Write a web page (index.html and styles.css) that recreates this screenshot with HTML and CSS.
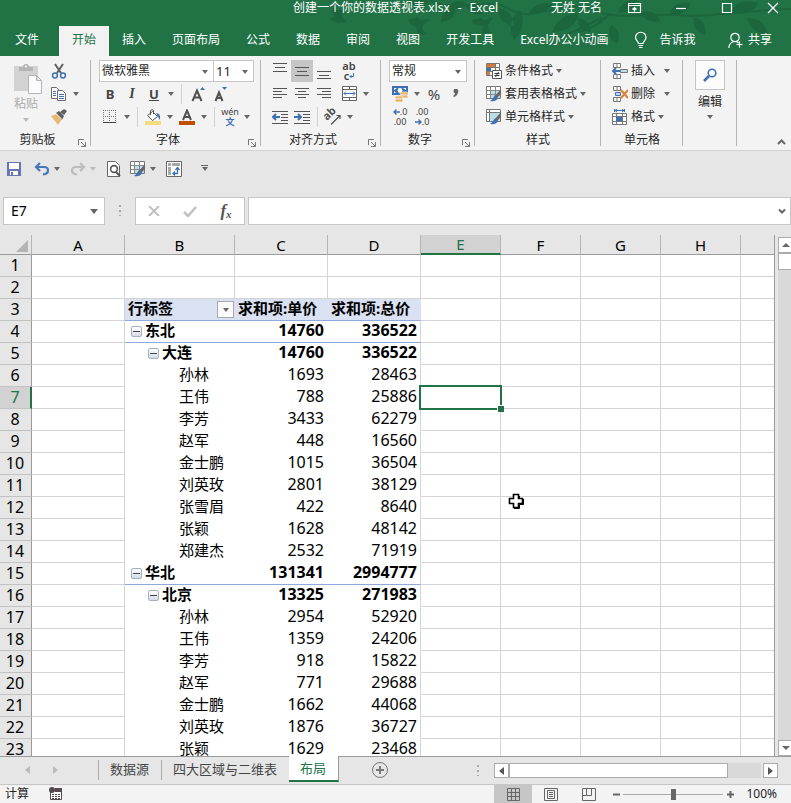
FILE: index.html
```html
<!DOCTYPE html>
<html lang="zh-CN">
<head>
<meta charset="utf-8">
<title>创建一个你的数据透视表.xlsx - Excel</title>
<link rel="stylesheet" href="styles.css">
</head>
<body>
<header class="top">
  <svg class="leaves" viewBox="0 0 471 56" width="471" height="56" aria-hidden="true">
    <g fill="#1c663d">
      <path d="M12 8l5 2 6-1-1 8 4 5-8 1-9-4 5-2z"/>
      <path d="M88 20l9-3 4 3 9-1-8 7 2 6 4 2-10 1-2-8-6-3z"/>
      <path d="M152 20l8-2 5 2 8-3-5 8 1 6 4 2-11 1 1-8-10-2z"/>
      <path d="M88 0c6 8 14 8 22 2l-3-2zM128 6c6-6 12-6 18-3-5 6-11 7-18 3zM121 22c0-8 6-14 14-15 1 9-4 14-14 15zM146 4c2 8 8 12 18 10-2-8-8-11-18-10z"/>
      <path d="M178 8c10 1 16 9 16 18-11-2-16-8-16-18zM209 13c9 0 18-2 24-8-9-4-19-1-24 8zM200 10c-10 8-12 18-6 30 9-9 11-19 6-30z"/>
      <path d="M232 32c4-11 13-18 27-19-3 12-12 19-27 19zM258 18c8 1 12 6 13 14-9-1-13-6-13-14zM298 13c2-9 9-14 19-13-2 9-9 13-19 13zM320 12c10-3 17 1 20 9-9 2-16-1-20-9z"/>
      <path d="M291 25c8 4 10 11 6 19-8-5-10-12-6-19zM265 38c7-4 13-2 17 4-7 3-13 2-17-4zM350 14c2-9 10-13 21-11-4 9-11 13-21 11zM374 17c9 2 13 9 11 18-9-3-13-10-11-18zM410 12c6-10 16-13 28-9-5 10-15 13-28 9zM427 18c12 0 19 6 21 17-12-2-19-8-21-17z"/>
    </g>
    <g fill="none" stroke="#1c663d" stroke-width="2">
      <path d="M110 0c14 10 42 4 66 4 10 0 18 12 34 10 26-4 42-12 60-5 30 12 50 4 86 6 32 3 56-4 115-6M258 32c14-2 22-10 32-18M230 40c20-4 36-16 52-22"/>
    </g>
  </svg>
  <div class="title-row">
    <div class="title"><span>创建一个你的数据透视表.xlsx</span><span>-</span><span>Excel</span></div>
    <div class="window">
      <span class="user">无姓 无名</span>
      <button aria-label="功能区显示选项"><svg class="line" width="14" height="12" viewBox="0 0 14 12"><path d="M.5 1.500h12v9H.5zM.5 3.500h12M6.500 9.500v-4M4.500 7.500l2-2 2 2"/></svg></button>
      <button aria-label="最小化"><svg class="line" width="12" height="12" viewBox="0 0 12 12"><path d="M1 6.500h10"/></svg></button>
      <button aria-label="最大化"><svg class="line" width="12" height="12" viewBox="0 0 12 12"><path d="M1.500 1.500h9v9h-9z"/></svg></button>
      <button aria-label="关闭"><svg class="line" width="12" height="12" viewBox="0 0 12 12"><path d="M1 1l10 10M11 1L1 11"/></svg></button>
    </div>
  </div>
  <nav class="tabs">
    <a class="file" href="#">文件</a><a class="on" href="#">开始</a><a href="#">插入</a><a href="#">页面布局</a><a href="#">公式</a><a href="#">数据</a><a href="#">审阅</a><a href="#">视图</a><a href="#">开发工具</a><a href="#">Excel办公小动画</a>
    <button class="tell"><svg class="line" width="14" height="18" viewBox="0 0 14 18"><path d="M4.500 12.500c0-2-3-3-3-6a5 5 0 0 1 10.500 0c0 3-3 4-3 6zM4.500 14.500h4.500M5 16.500h3.500"/></svg>告诉我</button>
    <button class="share"><svg class="line" width="16" height="17" viewBox="0 0 16 17"><circle cx="7" cy="5.500" r="4.200"/><path d="M.8 16c.2-3.500 2.200-5.500 4.500-6.300M8.500 9.500l2 1.500M11.500 9.500v6M8.500 12.500h6"/></svg>共享</button>
  </nav>
</header>

<section class="ribbon" aria-label="开始">
  <div class="group clip">
    <div class="clip-body">
      <button class="paste"><svg width="30" height="32" viewBox="0 0 30 32"><path fill="#d2d2d2" d="M1 3h24v25H1z"/><path fill="#b4b4b4" d="M6 4h4a3 3 0 0 1 6 0h4v4H6z"/><circle cx="13" cy="3.500" r="1" fill="#fff"/><path fill="#fbfbfd" stroke="#b4b4b8" d="M15.500 12.500h8l5 5v13h-13zM23.500 12.500v5h5"/></svg><span>粘贴</span><i class="caret pale"></i></button>
      <div class="rows">
        <div class="row"><button class="b" aria-label="剪切"><svg width="16" height="16" viewBox="0 0 16 16"><path stroke="#5f5f5f" stroke-width="2" d="M4 1l6 9M12 1L6 10"/><g fill="none" stroke="#3f70b4" stroke-width="1.500"><circle cx="4" cy="12.500" r="2.400"/><circle cx="12" cy="12.500" r="2.400"/></g></svg></button></div>
        <div class="row"><button class="b" aria-label="复制"><svg width="16" height="16" viewBox="0 0 16 16"><g fill="#fff" stroke="#6a6a6a"><path d="M.5 1.500h5l3 3v8h-8z"/><path d="M6.500 4.500h5l3 3v7h-8z"/></g><path stroke="#3f70b4" d="M2 5.500h3M2 7.500h3M2 9.500h3M8 8.500h5M8 10.500h5M8 12.500h5"/></svg></button><button class="drop" aria-label="复制选项"><i class="caret"></i></button></div>
        <div class="row"><button class="b" aria-label="格式刷"><svg width="16" height="16" viewBox="0 0 16 16"><path fill="#e9b872" d="M0 7l6-2 5 5-4 6z"/><path fill="#5f5f5f" d="M5 4l3-2 5 5-2 4zM9 3l4-3 3 2-3 4z"/><path stroke="#fff" d="M5 4.500l6 6"/></svg></button></div>
      </div>
    </div>
    <footer><span>剪贴板</span><button class="launch" aria-label="剪贴板设置"><svg width="8" height="8" viewBox="0 0 8 8"><path d="M.5 6V.5H6M3 3l4 4M7.500 3v4.500H3"/></svg></button></footer>
  </div>

  <div class="group font">
    <div class="row"><span class="combo wide"><select aria-label="字体"><option>微软雅黑</option></select><i class="caret"></i></span><span class="combo size"><select aria-label="字号"><option>11</option></select><i class="caret"></i></span></div>
    <div class="row"><button class="b bold">B</button><button class="b ital">I</button><button class="b und">U</button><button class="drop" aria-label="下划线选项"><i class="caret"></i></button><i class="sep"></i><button class="b" aria-label="增大字号"><svg width="16" height="16" viewBox="0 0 16 16"><path fill="none" stroke="#505050" stroke-width="2" d="M3.500 15L8 4.500 12.500 15M5 11.500h6"/><path fill="#3f70b4" d="M11 4l2.500-3L16 4z"/></svg></button><button class="b" aria-label="减小字号"><svg width="16" height="16" viewBox="0 0 16 16"><path fill="none" stroke="#505050" stroke-width="2" d="M4.500 15L8 6.500l3.500 8.500M6 12h4"/><path fill="#3f70b4" d="M11 1h5l-2.500 3z"/></svg></button></div>
    <div class="row"><button class="b" aria-label="边框"><svg width="14" height="14" viewBox="0 0 14 14"><path fill="none" stroke="#777" stroke-dasharray="1 1" d="M.5 0v12M6.500 0v12M12.500 0v12M0 .5h13M0 6.500h13"/><path stroke="#444" d="M0 12.500h13"/></svg></button><button class="drop" aria-label="边框选项"><i class="caret"></i></button><i class="sep"></i><button class="b" aria-label="填充颜色"><svg width="16" height="16" viewBox="0 0 16 16"><path fill="#fff" stroke="#555" d="M2.500 6.500l5-4 5 5-5 4z"/><path fill="none" stroke="#555" d="M5.500 6V1.500q1.500-2 3 0V5"/><path fill="#3f70b4" d="M11 4q5 0 4 7l-2-3z"/><path fill="#f5dd7b" d="M0 12h16v4H0z"/></svg></button><button class="drop" aria-label="填充选项"><i class="caret"></i></button><button class="b" aria-label="字体颜色"><svg width="16" height="16" viewBox="0 0 16 16"><path fill="none" stroke="#505050" stroke-width="2" d="M4 11L8 1.500 12 11M5 8h6"/><path fill="#bf5000" d="M0 12h16v4H0z"/></svg></button><button class="drop" aria-label="颜色选项"><i class="caret"></i></button><i class="sep"></i><button class="b pinyin"><span>wén</span><b>文</b></button><button class="drop" aria-label="拼音选项"><i class="caret"></i></button></div>
    <footer><span>字体</span><button class="launch" aria-label="字体设置"><svg width="8" height="8" viewBox="0 0 8 8"><path d="M.5 6V.5H6M3 3l4 4M7.500 3v4.500H3"/></svg></button></footer>
  </div>

  <div class="group align">
    <div class="row"><button class="b" aria-label="顶端对齐"><svg class="bars" width="14" height="16" viewBox="0 0 14 16"><path d="M0 .5h14M2 4.500h10M0 8.500h14"/></svg></button><button class="b on" aria-label="垂直居中"><svg class="bars" width="14" height="16" viewBox="0 0 14 16"><path d="M0 4.500h14M2 8.500h10M0 12.500h14"/></svg></button><button class="b" aria-label="底端对齐"><svg class="bars" width="14" height="16" viewBox="0 0 14 16"><path d="M0 8.500h14M2 12.500h10M0 15.500h14"/></svg></button><button class="b next wrap" aria-label="自动换行"><span>ab</span><span>c<svg width="5" height="8" viewBox="0 0 5 8"><path fill="none" stroke="#3f70b4" d="M4.500 0v3.500H1M2.500 2L1 3.500 2.500 5"/></svg></span></button></div>
    <div class="row"><button class="b" aria-label="左对齐"><svg class="bars" width="14" height="14" viewBox="0 0 14 14"><path d="M0 1.500h14M0 4.500h9M0 7.500h14M0 10.500h9"/></svg></button><button class="b" aria-label="居中"><svg class="bars" width="14" height="14" viewBox="0 0 14 14"><path d="M0 1.500h14M3 4.500h8M0 7.500h14M3 10.500h8"/></svg></button><button class="b" aria-label="右对齐"><svg class="bars" width="14" height="14" viewBox="0 0 14 14"><path d="M0 1.500h14M5 4.500h9M0 7.500h14M5 10.500h9"/></svg></button><button class="b next" aria-label="合并后居中"><svg width="15" height="15" viewBox="0 0 15 15"><path fill="#fff" stroke="#666" d="M.5.5h14v14H.5zM.5 3.500h14M.5 11.500h14M7.500 0v3M7.500 12v3"/><path fill="none" stroke="#3f70b4" d="M2 7.500h11M4 5.500l-2 2 2 2M11 5.500l2 2-2 2"/></svg></button><button class="drop" aria-label="合并选项"><i class="caret"></i></button></div>
    <div class="row"><button class="b" aria-label="减少缩进"><svg class="bars" width="16" height="14" viewBox="0 0 16 14"><path d="M0 1.500h16M9 4.500h7M9 7.500h7M9 10.500h7M0 13.500h16"/><path class="blue" d="M8 7H1M4 4L1 7l3 3"/></svg></button><button class="b" aria-label="增加缩进"><svg class="bars" width="16" height="14" viewBox="0 0 16 14"><path d="M0 1.500h16M9 4.500h7M9 7.500h7M9 10.500h7M0 13.500h16"/><path class="blue" d="M0 7h7M4 4l3 3-3 3"/></svg></button><i class="sep"></i><button class="b" aria-label="方向"><svg width="18" height="18" viewBox="0 0 18 18"><text class="slant" x="3" y="13" transform="rotate(-45 3 13)">ab</text><path fill="none" stroke="#505050" stroke-width="1.200" d="M7 16.500L16 7.500M12.500 7.500H16V11"/></svg></button><button class="drop" aria-label="方向选项"><i class="caret"></i></button></div>
    <footer><span>对齐方式</span><button class="launch" aria-label="对齐设置"><svg width="8" height="8" viewBox="0 0 8 8"><path d="M.5 6V.5H6M3 3l4 4M7.500 3v4.500H3"/></svg></button></footer>
  </div>

  <div class="group number">
    <div class="row"><span class="combo fmt"><select aria-label="数字格式"><option>常规</option></select><i class="caret"></i></span></div>
    <div class="row"><button class="b" aria-label="会计数字格式"><svg width="16" height="16" viewBox="0 0 16 16"><path fill="#3f70b4" d="M0 0h16v9H0z"/><path fill="#fff" d="M2 2h3L2 4zM11 2h3v2zM2 5l2 2H2z"/><circle cx="8" cy="4.500" r="2.400" fill="#fff"/><g fill="#e8b268" stroke="#f3f3f3" stroke-width=".7"><rect x="8" y="6" width="8" height="3" rx="1.500"/><rect x="8" y="9" width="8" height="3" rx="1.500"/><rect x="3" y="10" width="8" height="3" rx="1.500"/><rect x="3" y="13" width="8" height="3" rx="1.500"/></g></svg></button><button class="drop" aria-label="货币选项"><i class="caret"></i></button><button class="b pct">%</button><button class="b comma" aria-label="千位分隔样式"><svg width="6" height="9" viewBox="0 0 6 9"><path fill="#666" d="M1 0h3q2 1 1 4-1 3-4 4l-1-1q2-1 2-3H1q-1-2 0-4z"/></svg></button></div>
    <div class="row"><button class="b dec" aria-label="增加小数位数"><span><svg width="7" height="6" viewBox="0 0 7 6"><path d="M7 3H1M3.500.5L1 3l2.500 2.500"/></svg>.0</span><span>.00</span></button><button class="b dec" aria-label="减少小数位数"><span>.00</span><span><svg width="7" height="6" viewBox="0 0 7 6"><path d="M0 3h6M3.500.5L6 3 3.500 5.500"/></svg>.0</span></button></div>
    <footer><span>数字</span><button class="launch" aria-label="数字设置"><svg width="8" height="8" viewBox="0 0 8 8"><path d="M.5 6V.5H6M3 3l4 4M7.500 3v4.500H3"/></svg></button></footer>
  </div>

  <div class="group styles">
    <div class="row"><button class="cmd"><svg width="16" height="16" viewBox="0 0 16 16"><path fill="#fff" stroke="#777" d="M.5.500h13v12H.5zM.5 4.500h13M.5 8.500h13M9.500 0v12"/><path fill="#d17a3c" d="M1 1h8v3H1zM1 9h3v3H1z"/><path fill="#3f70b4" d="M1 5h4v3H1z"/><path fill="#fff" stroke="#555" d="M6.500 7.500h9v8h-9z"/><path stroke="#333" d="M8.500 10.500h5M8.500 12.500h5M12.500 9l-3 5"/></svg>条件格式<i class="caret"></i></button></div>
    <div class="row"><button class="cmd"><svg width="16" height="16" viewBox="0 0 16 16"><path fill="#fff" stroke="#777" d="M.5.500h14v12H.5z"/><path fill="#bcdde6" d="M5 5h9v7H5z"/><path stroke="#888" d="M.5 4.500h14M.5 8.500h14M4.500 0v12M9.500 0v12"/><path fill="#666" d="M15 3v5l-4 4-2-2z"/><path fill="#3f70b4" d="M9 9l3 3q-2 4-8 3 3-2 5-6z"/></svg>套用表格格式<i class="caret"></i></button></div>
    <div class="row"><button class="cmd"><svg width="16" height="16" viewBox="0 0 16 16"><path fill="#fff" stroke="#777" d="M.5.500h14v12H.5zM.5 3.500h14M3.500 0v12"/><path fill="#bcdde6" d="M4 4h10v8H4z"/><path fill="#666" d="M15 3v5l-4 4-2-2z"/><path fill="#3f70b4" d="M9 9l3 3q-2 4-8 3 3-2 5-6z"/></svg>单元格样式<i class="caret"></i></button></div>
    <footer><span>样式</span></footer>
  </div>

  <div class="group cells">
    <div class="row"><button class="cmd even"><svg width="16" height="16" viewBox="0 0 16 16"><path fill="#fff" stroke="#777" d="M1.500.500h7v4h-7zM5 0v4M1.500 11.500h7v4h-7zM5 11v4"/><path fill="#bcdde6" stroke="#777" d="M8.500 6.500h7v3h-7z"/><path fill="none" stroke="#3f70b4" stroke-width="2" d="M8 8H1M4 5L1 8l3 3"/></svg>插入<i class="caret"></i></button></div>
    <div class="row"><button class="cmd even"><svg width="16" height="16" viewBox="0 0 16 16"><path fill="#fff" stroke="#777" d="M1.500.500h7v4h-7zM5 0v4M1.500 11.500h7v4h-7zM5 11v4"/><path fill="#bcdde6" stroke="#3f70b4" d="M3.500 6.500h5v3h-5z"/><path stroke="#dd812e" stroke-width="2" d="M9 4l7 8M16 4l-7 8"/></svg>删除<i class="caret"></i></button></div>
    <div class="row"><button class="cmd"><svg width="16" height="16" viewBox="0 0 16 16"><path fill="none" stroke="#3f70b4" d="M2 1.500h11M2.500 0v3M12.500 0v3M5 0L3 1.500 5 3M10 0l2 1.500L10 3"/><path fill="#fff" stroke="#777" d="M.5 4.500h14v11H.5zM.5 7.500h14M.5 12.500h14M4.500 4v12M10.500 4v12"/><path fill="#3f70b4" d="M4 8h6v4H4z"/></svg>格式<i class="caret"></i></button></div>
    <footer><span>单元格</span></footer>
  </div>

  <div class="group edit">
    <button class="find"><span class="lens"><svg width="14" height="14" viewBox="0 0 14 14"><circle cx="9" cy="5" r="3.800" fill="none" stroke="#3f70b4" stroke-width="1.600"/><path stroke="#3f70b4" stroke-width="2.600" d="M6 8l-5 5"/></svg></span><span>编辑</span><i class="caret"></i></button>
  </div>
  <button class="fold" aria-label="折叠功能区"><svg width="9" height="6" viewBox="0 0 9 6"><path fill="none" stroke="#666" stroke-width="2" d="M1 5l3.500-3.500L8 5"/></svg></button>
</section>

<div class="quick">
  <button class="q" aria-label="保存"><svg width="14" height="14" viewBox="0 0 14 14"><path fill="#6676b0" d="M0 0h14v14H0z"/><path fill="#fff" d="M2 1h10v6H2zM3 9h8v4H3z"/><path fill="#6676b0" d="M4 10h2v3H4z"/></svg></button>
  <button class="q" aria-label="撤消"><svg width="16" height="14" viewBox="0 0 16 14"><path fill="none" stroke="#4577b9" stroke-width="2.200" d="M2 5h8q4 0 4 3.500T9 12.500M6 1L2 5l4 4"/></svg></button><button class="drop" aria-label="撤消列表"><i class="caret"></i></button>
  <button class="q" aria-label="恢复"><svg width="16" height="14" viewBox="0 0 16 14"><path fill="none" stroke="#bcbcbc" stroke-width="2.200" d="M14 5H6Q2 5 2 8.500t5 4M10 1l4 4-4 4"/></svg></button><button class="drop" aria-label="恢复列表"><i class="caret pale"></i></button>
  <button class="q" aria-label="打印预览"><svg width="14" height="16" viewBox="0 0 14 16"><path fill="#fff" stroke="#666" d="M.5.500h8l4 4v11H.5z"/><circle cx="7" cy="8" r="3.400" fill="#fff" stroke="#555" stroke-width="1.600"/><path stroke="#555" stroke-width="2" d="M9 11l4 4"/></svg></button>
  <button class="q near" aria-label="表格样式"><svg width="16" height="16" viewBox="0 0 16 16"><path fill="#fff" stroke="#777" d="M.5.500h14v12H.5z"/><path fill="#bcdde6" d="M5 5h9v7H5z"/><path stroke="#888" d="M.5 4.500h14M.5 8.500h14M4.500 0v12M9.500 0v12"/><path fill="#666" d="M15 3v5l-4 4-2-2z"/><path fill="#3f70b4" d="M9 9l3 3q-2 4-8 3 3-2 5-6z"/></svg></button><button class="drop" aria-label="样式列表"><i class="caret"></i></button>
  <button class="q" aria-label="数据透视表"><svg width="16" height="16" viewBox="0 0 16 16"><path fill="#fff" stroke="#666" d="M.5.500h15v15H.5z"/><path fill="#a9a9a9" d="M2 2h3v3H2zM6 2h8v3H6zM2 6h3v8H2z"/><path fill="none" stroke="#3f70b4" stroke-width="1.300" d="M7 12.500h4.500V7M9 10.500l-2 2 2 2M9.500 9l2-2.500 2 2.500"/></svg></button>
  <button class="more" aria-label="自定义快速访问工具栏"><i class="caret"></i></button>
</div>

<div class="formula">
  <span class="name"><input aria-label="名称框" value="E7"><i class="caret"></i></span>
  <i class="dots"></i>
  <span class="entry">
    <button aria-label="取消"><svg width="12" height="10" viewBox="0 0 12 10"><path stroke="#c0c0c0" stroke-width="2" d="M1 0l10 10M11 0L1 10"/></svg></button>
    <button aria-label="输入"><svg width="14" height="11" viewBox="0 0 14 11"><path fill="none" stroke="#c0c0c0" stroke-width="2.500" d="M1 6l4 4 8-9"/></svg></button>
    <button class="fx" aria-label="插入函数"><i>f</i><small>x</small></button>
  </span>
  <span class="bar"><input aria-label="编辑栏"><svg width="8" height="7" viewBox="0 0 8 7"><path fill="none" stroke="#666" stroke-width="2" d="M1 1.500L4 4.500l3-3"/></svg></span>
</div>

<main class="sheet">
  <div class="pane">
    <table>
      <colgroup><col class="c0"><col class="c3"><col class="c2"><col class="c3"><col class="c3"><col class="c4"><col class="c4"><col class="c4"><col class="c4"><col></colgroup>
      <thead><tr><th class="all"><svg width="12" height="12" viewBox="0 0 12 12"><path fill="#b4b4b4" d="M12 0v12H0z"/></svg></th><th>A</th><th>B</th><th>C</th><th>D</th><th class="sel">E</th><th>F</th><th>G</th><th>H</th><th></th></tr></thead>
      <tbody>
        <tr><th>1</th><td></td><td></td><td></td><td></td><td></td><td></td><td></td><td></td><td></td></tr>
        <tr><th>2</th><td></td><td></td><td></td><td></td><td></td><td></td><td></td><td></td><td></td></tr>
        <tr class="p head"><th>3</th><td></td><td><span class="lab">行标签<button class="filter" aria-label="筛选行标签"><i class="caret"></i></button></span></td><td>求和项:单价</td><td>求和项:总价</td><td></td><td></td><td></td><td></td><td></td></tr>
        <tr class="p sum"><th>4</th><td></td><td class="l1"><button class="min" aria-label="折叠"></button>东北</td><td>14760</td><td>336522</td><td></td><td></td><td></td><td></td><td></td></tr>
        <tr class="p sub"><th>5</th><td></td><td class="l2"><button class="min" aria-label="折叠"></button>大连</td><td>14760</td><td>336522</td><td></td><td></td><td></td><td></td><td></td></tr>
        <tr class="p"><th>6</th><td></td><td>孙林</td><td>1693</td><td>28463</td><td></td><td></td><td></td><td></td><td></td></tr>
        <tr class="p"><th class="sel">7</th><td></td><td>王伟</td><td>788</td><td>25886</td><td class="active"></td><td></td><td></td><td></td><td></td></tr>
        <tr class="p"><th>8</th><td></td><td>李芳</td><td>3433</td><td>62279</td><td></td><td></td><td></td><td></td><td></td></tr>
        <tr class="p"><th>9</th><td></td><td>赵军</td><td>448</td><td>16560</td><td></td><td></td><td></td><td></td><td></td></tr>
        <tr class="p"><th>10</th><td></td><td>金士鹏</td><td>1015</td><td>36504</td><td></td><td></td><td></td><td></td><td></td></tr>
        <tr class="p"><th>11</th><td></td><td>刘英玫</td><td>2801</td><td>38129</td><td></td><td></td><td></td><td></td><td></td></tr>
        <tr class="p"><th>12</th><td></td><td>张雪眉</td><td>422</td><td>8640</td><td></td><td></td><td></td><td></td><td></td></tr>
        <tr class="p"><th>13</th><td></td><td>张颖</td><td>1628</td><td>48142</td><td></td><td></td><td></td><td></td><td></td></tr>
        <tr class="p"><th>14</th><td></td><td>郑建杰</td><td>2532</td><td>71919</td><td></td><td></td><td></td><td></td><td></td></tr>
        <tr class="p sum"><th>15</th><td></td><td class="l1"><button class="min" aria-label="折叠"></button>华北</td><td>131341</td><td>2994777</td><td></td><td></td><td></td><td></td><td></td></tr>
        <tr class="p sub"><th>16</th><td></td><td class="l2"><button class="min" aria-label="折叠"></button>北京</td><td>13325</td><td>271983</td><td></td><td></td><td></td><td></td><td></td></tr>
        <tr class="p"><th>17</th><td></td><td>孙林</td><td>2954</td><td>52920</td><td></td><td></td><td></td><td></td><td></td></tr>
        <tr class="p"><th>18</th><td></td><td>王伟</td><td>1359</td><td>24206</td><td></td><td></td><td></td><td></td><td></td></tr>
        <tr class="p"><th>19</th><td></td><td>李芳</td><td>918</td><td>15822</td><td></td><td></td><td></td><td></td><td></td></tr>
        <tr class="p"><th>20</th><td></td><td>赵军</td><td>771</td><td>29688</td><td></td><td></td><td></td><td></td><td></td></tr>
        <tr class="p"><th>21</th><td></td><td>金士鹏</td><td>1662</td><td>44068</td><td></td><td></td><td></td><td></td><td></td></tr>
        <tr class="p"><th>22</th><td></td><td>刘英玫</td><td>1876</td><td>36727</td><td></td><td></td><td></td><td></td><td></td></tr>
        <tr class="p"><th>23</th><td></td><td>张颖</td><td>1629</td><td>23468</td><td></td><td></td><td></td><td></td><td></td></tr>
      </tbody>
    </table>
    <svg class="cursor" width="17" height="17" viewBox="0 0 17 17"><path fill="#fff" stroke="#000" stroke-width="1.600" d="M5.500 1.500h5v4h4v5h-4v4h-5v-4h-4v-5h4z"/><path fill="none" stroke="#000" d="M11.500 3v2.500M15.500 6v5.500h-4v4H6"/></svg>
  </div>
  <div class="vscroll">
    <button aria-label="向上滚动"><i class="caret up"></i></button>
    <span class="vthumb"></span>
    <button class="end" aria-label="向下滚动"><i class="caret"></i></button>
  </div>
</main>

<div class="sheets">
  <button class="nav" aria-label="上一张"><i class="tri left pale"></i></button><button class="nav" aria-label="下一张"><i class="tri pale"></i></button>
  <a class="first" href="#">数据源</a><a href="#">四大区域与二维表</a><a class="on" href="#">布局</a>
  <button class="add" aria-label="新工作表"><svg width="18" height="18" viewBox="0 0 18 18"><circle cx="9" cy="9" r="7.500" fill="none" stroke="#777"/><path stroke="#777" stroke-width="2" d="M5 9h8M9 5v8"/></svg></button>
  <i class="dots"></i>
  <div class="hscroll">
    <button aria-label="向左滚动"><i class="tri left"></i></button>
    <span class="htrack"><span class="hthumb"></span></span>
    <button aria-label="向右滚动"><i class="tri"></i></button>
  </div>
</div>

<footer class="status">
  <span>计算</span>
  <svg class="macro" width="14" height="14" viewBox="0 0 14 14"><path fill="#fff" stroke="#554b50" d="M1.500 2.500h11v10h-11z"/><path fill="#554b50" d="M6 1h7v4H6z"/><circle cx="3" cy="3" r="3" fill="#554b50"/><path stroke="#554b50" stroke-dasharray="2 1" d="M3 7.500h9M3 9.500h9M3 11.500h9"/></svg>
  <div class="views">
    <button class="on" aria-label="普通"><svg width="13" height="13" viewBox="0 0 13 13"><path d="M.5.500h12v12H.5zM.5 4.500h12M.5 8.500h12M4.500 0v13M8.500 0v13"/></svg></button>
    <button aria-label="页面布局"><svg width="14" height="13" viewBox="0 0 14 13"><path d="M.5.500h13v12H.5zM3.500 2.500h7v8h-7zM5 4.500h4M5 6.500h4M5 8.500h4"/></svg></button>
    <button aria-label="分页预览"><svg width="14" height="13" viewBox="0 0 14 13"><path d="M.5.500h13v12H.5zM4.500 0v7.500h5V0M.5 7.500h4"/></svg></button>
  </div>
  <button class="z" aria-label="缩小"><svg width="7" height="7" viewBox="0 0 7 7"><path stroke-width="2" d="M0 3.500h7"/></svg></button>
  <input type="range" aria-label="显示比例" min="0" max="200" value="100">
  <button class="z" aria-label="放大"><svg width="7" height="7" viewBox="0 0 7 7"><path stroke-width="2" d="M0 3.500h7M3.500 0v7"/></svg></button>
  <span class="pct100">100%</span>
</footer>
</body>
</html>
```
FILE: styles.css
```css
* { box-sizing: border-box; }
body {
  margin: 0;
  height: 100vh;
  display: flex;
  flex-direction: column;
  overflow: hidden;
  background: #e6e6e6;
  color: #262626;
  font: 12px/16px "Noto Sans", "Noto Sans CJK SC", sans-serif;
}
button, input, select { font: inherit; color: inherit; border: 0; background: none; padding: 0; margin: 0; }
button { display: flex; align-items: center; justify-content: center; }
a { color: inherit; text-decoration: none; }
svg { flex: none; display: block; }

.caret { flex: none; width: 0; height: 0; border: 3px solid transparent; border-top: 4px solid #666; border-bottom: 0; }
.caret.up { border-top: 0; border-bottom: 4px solid #666; }
.tri { width: 0; height: 0; border: 4px solid transparent; border-left: 5px solid #555; border-right: 0; }
.tri.left { border-left: 0; border-right: 5px solid #555; }
.caret.pale { border-top-color: #bbb; }
.tri.pale { border-left-color: #bbb; }
.tri.left.pale { border-right-color: #bbb; }

/* title bar and tabs */
.top { position: relative; background: #217346; color: #fff; flex: none; overflow: hidden; }
.leaves { position: absolute; right: 0; top: 0; }
.title-row { position: relative; display: grid; grid-template-columns: 1fr auto 1fr; height: 26px; }
.title { grid-column: 2; display: flex; gap: 8px; }
.window { display: flex; justify-content: flex-end; gap: 10px; height: 15px; white-space: nowrap; }
.window button { width: 36px; }
.user { margin-right: 5px; }
.line { fill: none; stroke: #fff; stroke-width: 1.2; }
.tabs { position: relative; display: flex; height: 30px; line-height: 28px; padding-left: 2px; white-space: nowrap; }
.tabs a { padding: 0 13px; }
.tabs .file { margin-right: 7px; }
.tabs .on { background: #f3f3f3; color: #217346; }
.tell { gap: 12px; margin-left: 12px; height: 28px; }
.share { gap: 4px; margin-left: auto; margin-right: 19px; height: 28px; }

/* ribbon */
.ribbon { display: flex; flex: none; background: #f3f3f3; padding-top: 3px; border-bottom: 1px solid #d2d2d2; height: 95px; }
.group { display: flex; flex-direction: column; padding-left: 8px; background: linear-gradient(#b4b4b4, #b4b4b4) right 1px / 1px 86px no-repeat; flex: none; }
.row { display: flex; align-items: center; height: 23px; }
.group footer { display: flex; align-items: center; height: 22px; margin-left: -8px; padding: 2px 2px 0 0; }
.group footer span { flex: 1; text-align: center; }
.launch { width: 14px; height: 14px; margin-top: 6px; }
.launch svg { fill: none; stroke: #777; }
.clip { width: 91px; }
.font { width: 170px; }
.align { width: 120px; }
.number { width: 94px; }
.styles { width: 126px; padding-left: 11px; }
.cells { width: 82px; padding-left: 11px; }
.edit { width: 54px; padding: 0; }
.group.styles footer, .group.cells footer { margin-left: -11px; padding: 2px 0 0; }
.b { width: 22px; height: 22px; flex: none; color: #444; }
.b.on { background: #c6c6c6; }
.drop { width: 12px; height: 22px; flex: none; }
.sep { width: 1px; height: 20px; margin: 0 4px; background: #d0d0d0; }
.next { margin-left: 3px; }
.clip-body { display: flex; gap: 4px; padding-left: 4px; }
.paste { width: 32px; height: 69px; flex-direction: column; justify-content: flex-start; padding-top: 4px; color: #ababab; }
.paste span { line-height: 18px; margin-right: 4px; }
.paste .caret { margin: 5px 4px 0 0; }
.combo { position: relative; height: 22px; border: 1px solid #c6c6c6; background: #fff; }
.combo + .combo { margin-left: -1px; }
.combo select { appearance: none; width: 100%; height: 20px; padding-left: 2px; display: block; }
.combo .caret { position: absolute; right: 5px; top: 9px; }
.wide { width: 115px; }
.size { width: 41px; font-size: 13px; }
.fmt { width: 78px; }
.bold { font-weight: bold; font-size: 13px; }
.ital { font: italic bold 14px "Liberation Serif", serif; }
.und { font-weight: bold; font-size: 13px; text-decoration: underline; }
.pinyin { flex-direction: column; font-size: 9px; line-height: 10px; }
.pinyin b { color: #3f70b4; }
.bars { stroke: #555; fill: none; }
.bars .blue { stroke: #3f70b4; stroke-width: 2; }
.wrap { flex-direction: column; font-size: 11px; font-weight: 600; line-height: 10px; }
.wrap span { display: flex; align-items: flex-end; }
.slant { font-size: 11px; font-weight: bold; fill: #505050; }
.pct { font-size: 15px; }
.dec { flex-direction: column; font-size: 9px; line-height: 10px; align-items: center; }
.dec span { display: flex; align-items: center; }
.dec svg { fill: none; stroke: #3f70b4; stroke-width: 1.4; }
.cmd { gap: 3px; height: 22px; white-space: nowrap; }
.even .caret { margin-left: 6px; }
.find { flex-direction: column; height: 69px; justify-content: flex-start; padding-top: 1px; }
.lens { display: flex; align-items: center; justify-content: center; width: 30px; height: 30px; border: 1px solid #c6c6c6; background: #fcfcfc; margin-bottom: 4px; }
.find .caret { margin-top: 5px; }
.fold { margin: auto 5px 5px auto; }

/* quick access */
.quick { display: flex; align-items: center; flex: none; height: 37px; padding: 0 0 2px 3px; }
.q { width: 22px; height: 22px; }
.q + .q, .drop + .q { margin-left: 6px; }
.q + .near { margin-left: 2px; }
.quick .drop { width: 8px; }
.more { width: 7px; height: 8px; border-top: 1px solid #666; margin-left: 16px; }

/* formula bar */
.formula { display: flex; flex: none; height: 38px; padding: 9px 0 1px 3px; }
.formula > span { height: 28px; background: #fff; border: 1px solid #c6c6c6; display: flex; align-items: center; }
.name { width: 102px; font-size: 14px; padding: 0 6px 0 7px; color: #000; }
.name input { flex: 1; min-width: 0; }
.name .caret { border-width: 5px 4px 0; }
.dots { width: 2px; height: 11px; margin: 8px 14px; background: repeating-linear-gradient(#aaa 0 2px, transparent 2px 5px); }
.entry { width: 110px; justify-content: space-around; }
.entry button { width: 24px; height: 24px; }
.fx { font-family: "Liberation Serif", serif; font-size: 17px; font-weight: bold; color: #555; }
.fx small { font-size: 11px; font-style: italic; margin-top: 5px; }
.bar { flex: 1; margin-left: 3px; padding-right: 4px; }
.bar input { flex: 1; height: 24px; }

/* grid */
.sheet { flex: 1; min-height: 0; display: flex; padding-top: 9px; }
.pane { position: relative; flex: 1; overflow: hidden; background: #fff; border-right: 1px solid #9b9b9b; margin-right: 3px; }
table { width: 100%; table-layout: fixed; border-collapse: separate; border-spacing: 0; color: #000; font-size: 16px; line-height: 20px; }
.c0 { width: 32px; }
.c2 { width: 110px; }
.c3 { width: 93px; }
.c4 { width: 80px; }
th { font-weight: normal; padding: 0; background: #e6e6e6; }
thead th { height: 20px; font-size: 15px; line-height: 18px; border-bottom: 1px solid #9b9b9b; border-right: 1px solid #b5b5b5; }
thead th:last-child { border-right: 0; }
thead .sel { background: #d2d2d2; color: #217346; border-bottom: 2px solid #217346; }
.all svg { margin: 3px 3px 0 auto; }
tbody th { border-right: 1px solid #9b9b9b; border-bottom: 1px solid #c2c2c2; height: 22px; padding-right: 1px; line-height: 21px; }
tbody .sel { background: #d2d2d2; color: #217346; border-right: 2px solid #217346; padding-right: 0; }
td { height: 22px; padding: 0 0 2px; line-height: 19px; border-right: 1px solid #d4d4d4; border-bottom: 1px solid #d4d4d4; white-space: nowrap; }
td:last-child { border-right: 0; }
.p td:nth-child(3), .p td:nth-child(4), .p td:nth-child(5) { border-bottom-color: transparent; padding-right: 3px; text-align: right; }
.p td:nth-child(3), .p td:nth-child(4) { border-right: 0; padding-right: 4px; }
.p td:nth-child(3) { text-align: left; padding-left: 54px; font-size: 15px; }
.p td.l1 { padding-left: 6px; }
.p td.l2 { padding-left: 23px; }
.sum td, .sub td, .head td { font-weight: bold; }
.p.sum td:nth-child(3), .p.sum td:nth-child(4), .p.sum td:nth-child(5) { border-bottom-color: #8ea9db; }
.p.head td:nth-child(3), .p.head td:nth-child(4), .p.head td:nth-child(5) { background: #d9e1f2; border-right-color: #d9e1f2; border-bottom-color: #8ea9db; font-size: 15px; text-align: left; padding-left: 3px; }
.p.head td:nth-child(3) { padding-right: 1px; }
.lab { display: flex; align-items: center; justify-content: space-between; height: 19px; }
.filter { width: 17px; height: 17px; margin-top: 2px; border: 1px solid #aaa; background: #fbfbfb; }
.min { display: inline-block; vertical-align: 0; width: 11px; height: 11px; margin-right: 3px; border: 1px solid #a3b1c4; border-radius: 2px; background: linear-gradient(#444, #444) center / 7px 1px no-repeat, linear-gradient(#fff, #d5dce6); }
.active { position: relative; }
.active::before { content: ""; position: absolute; inset: -2px; border: 2px solid #217346; }
.active::after { content: ""; position: absolute; right: -4px; bottom: -4px; width: 6px; height: 6px; background: #217346; border: solid #fff; border-width: 1px 0 0 1px; }
.cursor { position: absolute; left: 508px; top: 258px; }

/* scroll bars */
.vscroll { width: 13px; margin-top: 2px; display: flex; flex-direction: column; background: #d9d9d9; }
.vscroll button { width: 15px; height: 16px; flex: none; background: #fff; border: 1px solid #ababab; }
.vthumb { height: 17px; width: 15px; background: #fff; border: 1px solid #ababab; }
.vscroll .end { margin-top: auto; }
.vscroll .caret { border-left-width: 4px; border-right-width: 4px; }

.sheets { display: flex; flex: none; height: 28px; border-top: 1px solid #9b9b9b; font-size: 13px; line-height: 22px; color: #444; white-space: nowrap; padding-left: 13px; }
.nav { width: 28px; height: 26px; }
.sheets a { padding: 0 12px 0 11px; height: 20px; margin-top: 3px; line-height: 18px; border-left: 1px solid #ababab; }
.sheets .first { margin-left: 29px; }
.sheets .on { margin-top: -1px; height: 26px; line-height: 24px; background: #fff; color: #217346; border: solid #9b9b9b; border-width: 0 1px 2px 0; border-bottom-color: #217346; }
.add { width: 18px; height: 26px; margin-left: 32px; }
.sheets .dots { margin: 8px 15px 0 auto; }
.hscroll { display: flex; width: 284px; height: 15px; margin: 6px 13px 0 0; }
.hscroll button { width: 15px; border: 1px solid #ababab; background: #fff; }
.htrack { flex: 1; margin-right: 2px; background: #d9d9d9; display: flex; }
.hthumb { width: 87%; background: #fff; border: 1px solid #ababab; }

.status { display: flex; align-items: center; flex: none; height: 19px; background: #f3f3f3; border-top: 1px solid #c6c6c6; padding: 0 14px 0 5px; }
.macro { margin-left: 20px; }
.views { display: flex; height: 18px; margin: 0 3px 0 auto; }
.views button { width: 38px; }
.views .on { background: #c6c6c6; }
.status svg:not(.macro) { fill: none; stroke: #666; }
.z { width: 10px; height: 18px; }
.status input { appearance: none; width: 104px; height: 18px; background: linear-gradient(#aaa, #aaa) center / 100px 1px no-repeat; }
.status input::-webkit-slider-thumb { appearance: none; width: 5px; height: 11px; background: #666; }
.pct100 { margin-left: 11px; }
```
